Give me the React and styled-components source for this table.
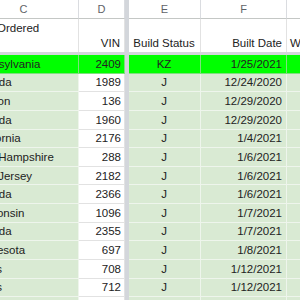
import React from 'react'
import styled, { createGlobalStyle } from 'styled-components'

const GlobalStyle = createGlobalStyle`
  html, body {
    margin: 0;
    padding: 0;
    background: #ffffff;
  }
`

const Sheet = styled.div`
  width: 300px;
  height: 300px;
  overflow: hidden;
  font-family: "Liberation Sans", Arial, sans-serif;
  font-size: 11.5px;
  color: #222222;
`

// the sheet is scrolled a little to the right, column C is partly hidden
const Grid = styled.div`
  margin-left: -31px;
  width: 430px;
`

const Row = styled.div`
  display: flex;
  height: ${(p) => p.h || 18.64}px;
  box-sizing: border-box;
`

const ColHead = styled.div`
  width: ${(p) => p.w}px;
  flex: none;
  box-sizing: border-box;
  height: 19px;
  border-right: 1px solid #dadce0;
  border-bottom: 1px solid #c4c7c5;
  background: #ffffff;
  color: #5f6368;
  font-size: 11px;
  display: flex;
  align-items: center;
  justify-content: center;
`

const TitleCell = styled.div`
  width: ${(p) => p.w}px;
  flex: none;
  box-sizing: border-box;
  border-right: 1px solid #e2e2e2;
  padding: ${(p) => (p.top ? '3px' : '0')} 4px 3px 3px;
  display: flex;
  flex-direction: column;
  justify-content: ${(p) => (p.top ? 'flex-start' : 'flex-end')};
  text-align: ${(p) => p.align || 'left'};
  white-space: nowrap;
  overflow: hidden;
`

const Indent = styled.span`
  display: block;
  padding-left: ${(p) => p.by}px;
`

const Cell = styled.div`
  width: ${(p) => p.w}px;
  flex: none;
  box-sizing: border-box;
  height: 100%;
  background: ${(p) => p.bg};
  border-right: 1px solid ${(p) => p.line};
  border-bottom: 1px solid ${(p) => p.line};
  padding: 0 ${(p) => p.pr || 4}px 0 3px;
  display: flex;
  align-items: center;
  justify-content: ${(p) =>
    p.align === 'right' ? 'flex-end' : p.align === 'center' ? 'center' : 'flex-start'};
  white-space: nowrap;
  overflow: hidden;
`

const FreezeV = styled.div`
  width: 4px;
  flex: none;
  height: 100%;
  background: #d3d6db;
`

const FreezeH = styled.div`
  height: 3px;
  background: #d3d6db;
`

const rows = [
  ['Pennsylvania', '2409', 'KZ', '1/25/2021', true],
  ['Nevada', '1989', 'J', '12/24/2020'],
  ['Oregon', '136', 'J', '12/29/2020'],
  ['Nevada', '1960', 'J', '12/29/2020'],
  ['California', '2176', 'J', '1/4/2021'],
  ['New Hampshire', '288', 'J', '1/6/2021'],
  ['New Jersey', '2182', 'J', '1/6/2021'],
  ['Nevada', '2366', 'J', '1/6/2021'],
  ['Wisconsin', '1096', 'J', '1/7/2021'],
  ['Nevada', '2355', 'J', '1/7/2021'],
  ['Minnesota', '697', 'J', '1/8/2021'],
  ['Texas', '708', 'J', '1/12/2021'],
  ['Texas', '712', 'J', '1/12/2021'],
  ['Nevada', '1102', 'J', '1/12/2021'],
]

const GREEN = '#00ff00'
const LIGHT = '#d9ead3'

export default function App() {
  return (
    <Sheet>
      <GlobalStyle />
      <Grid>
        <Row h={19}>
          <ColHead w={110}>C</ColHead>
          <ColHead w={46}>D</ColHead>
          <FreezeV />
          <ColHead w={72}>E</ColHead>
          <ColHead w={86}>F</ColHead>
          <ColHead w={100}>G</ColHead>
        </Row>
        <Row h={33}>
          <TitleCell w={110} top>
            <Indent by={25}>Ordered</Indent>
          </TitleCell>
          <TitleCell w={46} align="right">VIN</TitleCell>
          <FreezeV />
          <TitleCell w={72} align="center">Build Status</TitleCell>
          <TitleCell w={86} align="right">Built Date</TitleCell>
          <TitleCell w={100}>Week</TitleCell>
        </Row>
        <FreezeH />
        {rows.map((r, i) => {
          const hot = r[4]
          const bg = hot ? GREEN : LIGHT
          const line = hot ? '#7ee07e' : '#eef5ec'
          return (
            <Row key={i}>
              <Cell w={110} bg={bg} line={line}>{r[0]}</Cell>
              <Cell w={46} pr={3} bg={hot ? GREEN : '#ffffff'} line={hot ? line : '#e2e2e2'} align="right">
                {r[1]}
              </Cell>
              <FreezeV />
              <Cell w={72} bg={bg} line={line} align="center">{r[2]}</Cell>
              <Cell w={86} bg={bg} line={line} align="right">{r[3]}</Cell>
              <Cell w={100} bg={bg} line={line} />
            </Row>
          )
        })}
      </Grid>
    </Sheet>
  )
}
